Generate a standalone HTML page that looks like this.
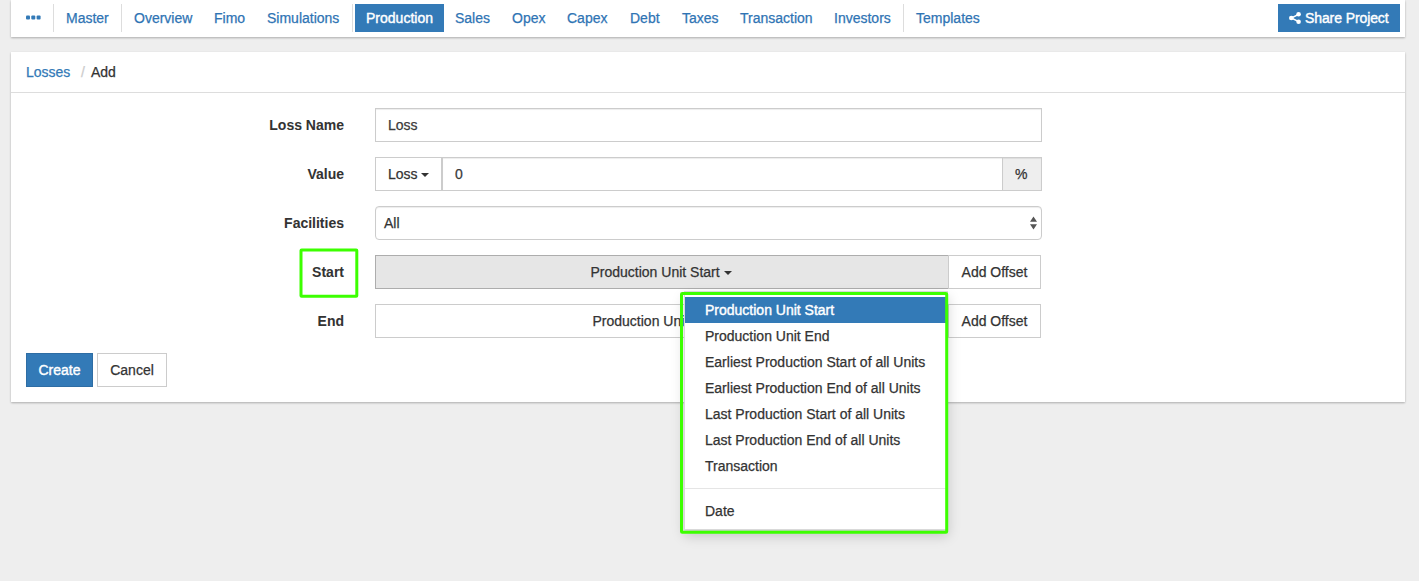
<!DOCTYPE html>
<html><head><meta charset="utf-8">
<style>
*{box-sizing:border-box;margin:0;padding:0}
html,body{width:1419px;height:581px;overflow:hidden}
body{background:#eee;font-family:"Liberation Sans",sans-serif;font-size:14px;line-height:20px;color:#333;position:relative;-webkit-text-stroke:.25px}
.abs{position:absolute}
.nav{left:11px;top:0;width:1394px;height:37px;background:#fff;box-shadow:0 1px 2px rgba(0,0,0,.28)}
.ni{position:absolute;top:8px;height:20px;color:#2f74b4;white-space:nowrap;text-align:center}
.dv{position:absolute;top:4px;width:1px;height:28px;background:#ddd}
.act{position:absolute;left:344px;top:4px;width:89px;height:28px;background:#337ab7}
.share{position:absolute;left:1267px;top:4px;width:122px;height:28px;background:#337ab7;color:#fff}
.panel{left:11px;top:52px;width:1394px;height:350px;background:#fff;box-shadow:0 1px 2px rgba(0,0,0,.28)}
.ph{position:absolute;left:0;top:0;width:1394px;height:41px;border-bottom:1px solid #ddd}
.lbl{position:absolute;right:1061px;font-weight:bold;-webkit-text-stroke:.05px;white-space:nowrap;text-align:right}
.inp{position:absolute;left:364px;height:34px;border:1px solid #ccc;background:#fff;color:#3a3a3a;box-shadow:inset 0 1px 1px rgba(0,0,0,.075)}
.txt{position:absolute;white-space:nowrap}
.caret{display:inline-block;width:0;height:0;border-top:4px solid;border-left:4px solid transparent;border-right:4px solid transparent;vertical-align:middle;margin-left:0}
.btn{position:absolute;height:34px;border:1px solid #ccc;background:#fff;color:#333;text-align:center;white-space:nowrap}
.menu{position:absolute;left:684px;top:291px;width:264px;height:239px;background:#fff;border:1px solid rgba(0,0,0,.15);box-shadow:0 6px 12px rgba(0,0,0,.175)}
.mi{position:absolute;left:0;width:262px;height:26px;padding:3px 20px;color:#333;white-space:nowrap}
.wt{-webkit-text-stroke:.4px #fff}
.green{position:absolute;border:3px solid #3cff00}
</style></head><body>
<div class="abs nav">
  <svg class="abs" style="left:15px;top:15px" width="16" height="5" viewBox="0 0 16 5"><rect x="0" y="0.5" width="4" height="4" rx="1" fill="#337ab7"/><rect x="5.3" y="0.5" width="4" height="4" rx="1" fill="#337ab7"/><rect x="10.6" y="0.5" width="4" height="4" rx="1" fill="#337ab7"/></svg>
  <div class="dv" style="left:42px"></div>
  <div class="ni" style="left:55px">Master</div>
  <div class="dv" style="left:110px"></div>
  <div class="ni" style="left:123px">Overview</div>
  <div class="ni" style="left:203px">Fimo</div>
  <div class="ni" style="left:256px">Simulations</div>
  <div class="dv" style="left:341px"></div>
  <div class="act"></div>
  <div class="ni wt" style="left:344px;width:89px;color:#fff">Production</div>
  <div class="ni" style="left:444px">Sales</div>
  <div class="ni" style="left:501px">Opex</div>
  <div class="ni" style="left:556px">Capex</div>
  <div class="ni" style="left:619px">Debt</div>
  <div class="ni" style="left:671px">Taxes</div>
  <div class="ni" style="left:729px">Transaction</div>
  <div class="ni" style="left:823px">Investors</div>
  <div class="dv" style="left:892px"></div>
  <div class="ni" style="left:905px">Templates</div>
  <div class="share">
    <svg class="abs" style="left:11px;top:8.4px" width="12" height="12" viewBox="0 0 12 12"><g fill="#fff"><circle cx="9.6" cy="2.3" r="2.3"/><circle cx="2.3" cy="6" r="2.3"/><circle cx="9.6" cy="9.7" r="2.3"/></g><path d="M9.6 2.3 L2.3 6 L9.6 9.7" stroke="#fff" stroke-width="1.5" fill="none"/></svg>
    <div class="txt wt" style="left:27px;top:4px;letter-spacing:-.1px">Share Project</div>
  </div>
</div>

<div class="abs panel">
  <div class="ph">
    <div class="txt" style="left:15px;top:10px;color:#337ab7">Losses</div>
    <div class="txt" style="left:70px;top:10px;color:#ccc">/</div>
    <div class="txt" style="left:80px;top:10px">Add</div>
  </div>

  <div class="lbl" style="top:63px">Loss Name</div>
  <div class="inp" style="top:56px;width:667px"><div class="txt" style="left:12px;top:6px">Loss</div></div>

  <div class="lbl" style="top:112px">Value</div>
  <div class="btn" style="left:364px;top:105px;width:67px"><div class="txt" style="left:12px;top:6px">Loss <span class="caret"></span></div></div>
  <div class="inp" style="left:431px;top:105px;width:572px"><div class="txt" style="left:12px;top:6px">0</div></div>
  <div class="inp" style="left:991px;top:105px;width:40px;background:#eee;color:#333"><div class="txt" style="left:12px;top:6px">%</div></div>

  <div class="lbl" style="top:161px">Facilities</div>
  <div class="inp" style="top:154px;width:667px;border-radius:4px;color:#333"><div class="txt" style="left:8px;top:6px">All</div>
    <svg class="abs" style="left:654px;top:9px" width="7" height="14" viewBox="0 0 7 14"><path d="M3.5 0.4 L7 5.8 L0 5.8 Z M3.5 13.6 L7 8.2 L0 8.2 Z" fill="#555"/></svg>
  </div>

  <div class="lbl" style="top:210px">Start</div>
  <div class="btn" style="left:364px;top:203px;width:574px;background:#e6e6e6;border-color:#adadad"><div class="txt" style="left:-1px;width:572px;top:6px;text-align:center">Production Unit Start <span class="caret"></span></div></div>
  <div class="btn" style="left:937px;top:203px;width:93px"><div class="txt" style="left:0;width:91px;top:6px;text-align:center">Add Offset</div></div>

  <div class="lbl" style="top:259px">End</div>
  <div class="btn" style="left:364px;top:252px;width:574px"><div class="txt" style="left:-1.3px;width:572px;top:6px;text-align:center">Production Unit End <span class="caret"></span></div></div>
  <div class="btn" style="left:937px;top:252px;width:93px"><div class="txt" style="left:0;width:91px;top:6px;text-align:center">Add Offset</div></div>

  <div class="btn" style="left:15px;top:301px;width:67px;background:#337ab7;border-color:#2e6da4;color:#fff"><div class="txt wt" style="left:0;width:65px;top:6px;text-align:center">Create</div></div>
  <div class="btn" style="left:86px;top:301px;width:70px"><div class="txt" style="left:0;width:68px;top:6px;text-align:center">Cancel</div></div>
</div>


<div class="menu">
  <div class="mi wt" style="top:5px;background:#337ab7;color:#fff">Production Unit Start</div>
  <div class="mi" style="top:31px">Production Unit End</div>
  <div class="mi" style="top:57px">Earliest Production Start of all Units</div>
  <div class="mi" style="top:83px">Earliest Production End of all Units</div>
  <div class="mi" style="top:109px">Last Production Start of all Units</div>
  <div class="mi" style="top:135px">Last Production End of all Units</div>
  <div class="mi" style="top:161px">Transaction</div>
  <div class="abs" style="left:0;top:196px;width:262px;height:1px;background:#e5e5e5"></div>
  <div class="mi" style="top:206px">Date</div>
</div>
<svg class="abs" style="left:0;top:0" width="1419" height="581"><g fill="none" stroke="#3cff00" stroke-width="3"><rect x="301" y="250" width="55.8" height="46.3" rx="0.6"/><rect x="681.5" y="293.4" width="265.2" height="238.9" rx="0.8"/></g></svg>
</body></html>
